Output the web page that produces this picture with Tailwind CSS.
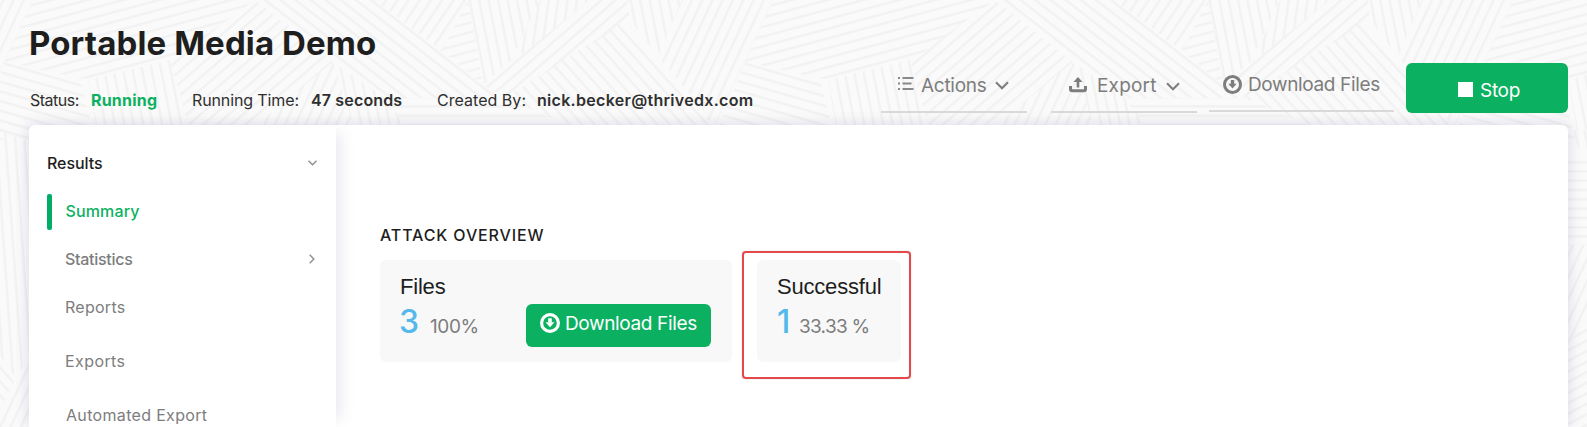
<!DOCTYPE html>
<html lang="en">
<head>
<meta charset="utf-8">
<title>Portable Media Demo</title>
<script src="https://cdn.jsdelivr.net/npm/@tailwindcss/browser@4"></script>
</head>
<body class="relative h-[427px] w-[1587px] overflow-hidden bg-[#fafafa] font-['Inter',sans-serif]">
<!-- Woven line texture behind the page -->
<svg class="absolute inset-0 -z-10" width="1587" height="427" viewBox="0 0 1587 427" aria-hidden="true">
  <defs>
    <pattern id="p0" width="20" height="9.3" patternUnits="userSpaceOnUse"><path d="M0 4h20" stroke="#f2f2f2" stroke-width="2.4"/></pattern>
    <pattern id="pn15" href="#p0" patternTransform="rotate(-15)"/>
    <pattern id="p16" href="#p0" patternTransform="rotate(16)"/>
    <pattern id="pn65" href="#p0" patternTransform="rotate(-65)"/>
    <pattern id="p79" href="#p0" patternTransform="rotate(79)"/>
    <pattern id="p86" href="#p0" patternTransform="rotate(86)"/>
    <pattern id="pn42" href="#p0" patternTransform="rotate(-41)"/>
    <pattern id="p38" href="#p0" patternTransform="rotate(38)"/>
    <pattern id="pn56" href="#p0" patternTransform="rotate(-56)"/>
    <pattern id="pn82" href="#p0" patternTransform="rotate(-82)"/>
    <pattern id="p48" href="#p0" patternTransform="rotate(48)"/>
    <pattern id="pn28" href="#p0" patternTransform="rotate(-28)"/>
    <g id="tile">
      <path fill="url(#pn65)" d="M682 0H773L713 130L700 105L658 57Z"/>
      <path fill="url(#pn15)" d="M33 0H255L170 62L88 80L5 62Z"/>
      <path fill="url(#p16)" d="M5 62L80 80L95 140H-27Z"/>
      <path fill="url(#p79)" d="M88 80L170 60L190 130H97Z"/>
      <path fill="url(#pn42)" d="M255 0L333 62L250 130H190L170 60Z"/>
      <path fill="url(#p38)" d="M257 0H375L483 85L505 98H385Z"/>
      <path fill="url(#pn65)" d="M333 62L355 130H250Z"/>
      <path fill="url(#p79)" d="M333 62L385 98L410 130H355Z"/>
      <path fill="url(#p0)" d="M385 98H505L580 130H405Z"/>
      <path fill="url(#pn56)" d="M375 0H466L442 51Z"/>
      <path fill="url(#pn15)" d="M468 0L442 51L483 85Z"/>
      <path fill="url(#p79)" d="M468 0H540L510 62L483 85Z"/>
      <path fill="url(#pn82)" d="M540 0H590L512 62Z"/>
      <path fill="url(#pn42)" d="M590 0H628L630 20L505 98L483 85Z"/>
      <path fill="url(#p48)" d="M622 22L718 130H580L505 98Z"/>
      <path fill="url(#p79)" d="M628 0H682L658 57L630 20Z"/>
    </g>
  </defs>
  <use href="#tile"/><use href="#tile" x="-740"/><use href="#tile" x="740"/><use href="#tile" x="1480"/>
  <path fill="url(#p16)" d="M0 124H29V141L0 132Z"/>
  <path fill="url(#p86)" d="M0 132L29 141V355L16 378L0 355Z"/>
  <path fill="url(#p48)" d="M0 355L16 378L0 410Z"/>
  <path fill="url(#pn65)" d="M29 355V427H0V410Z"/>
  <path fill="url(#p79)" d="M1568 130H1587V160Z"/>
  <path fill="url(#p0)" d="M1568 160H1587V245H1568Z"/>
  <path fill="url(#pn65)" d="M1568 245H1587V320L1568 345Z"/>
  <path fill="url(#pn28)" d="M1568 345L1587 320V427H1568Z"/>
</svg>

<header class="flex h-[125px] justify-between pr-[19px] pl-[29px]">
  <div class="pt-[23px]">
    <h1 class="h-10 text-[33px] leading-10 font-bold tracking-[0.13px] whitespace-nowrap text-[#1e1e1e]">Portable Media Demo</h1>
    <div class="mt-[27px] ml-px flex h-5 text-base leading-5 whitespace-nowrap text-[#2f2f2f]">
      <span class="w-[61px] tracking-[-0.5px]">Status:</span>
      <span class="w-[101px] font-bold tracking-[0.2px] text-[#0bb161]">Running</span>
      <span class="w-[119px] tracking-[-0.12px]">Running Time:</span>
      <span class="w-[126px] font-semibold tracking-[0.15px]">47 seconds</span>
      <span class="w-[100px] tracking-[0.03px]">Created By:</span>
      <span class="font-semibold tracking-[0.3px]">nick.becker@thrivedx.com</span>
    </div>
  </div>
  <div class="flex items-start pt-[63px] text-[19px] leading-6 whitespace-nowrap text-[#7d7d7d]">
    <button class="flex h-[50px] w-[146px] items-center border-b-2 border-[#d9d9d9] pb-[3px] pl-[17px]">
      <svg class="mb-1 shrink-0" width="16" height="15" viewBox="0 0 16 15" stroke="#8a8a8a" stroke-width="2" fill="none"><path d="M0 2h2M0 7.500h2M0 13h2" stroke-width="1.800"/><path d="M4.500 2H15.500M4.500 7.500H13.500M4.500 13H15.500"/></svg>
      <span class="ml-[7px] w-[74px] text-left tracking-[-0.28px]">Actions</span>
      <svg class="shrink-0" width="14" height="9" viewBox="0 0 14 9" fill="none" stroke="#7d7d7d" stroke-width="2"><path d="M1 1.200L7 7.300L13 1.200"/></svg>
    </button>
    <button class="ml-6 flex h-[50px] w-[146px] items-center border-b-2 border-[#d9d9d9] pb-0.5 pl-[18px]">
      <svg class="mb-0.5 shrink-0" width="18" height="16" viewBox="0 0 18 16" fill="none" stroke="#7d7d7d"><path d="M1.500 9V12.200Q1.500 13.700 3.200 13.700H14.800Q16.500 13.700 16.500 12.200V9" stroke-width="3"/><path d="M9 10.500V3" stroke-width="2.600"/><path d="M9 0L13.500 5H4.500Z" fill="#7d7d7d" stroke="none"/></svg>
      <span class="ml-2.5 w-[69px] text-left tracking-[0.2px]">Export</span>
      <svg class="shrink-0" width="14" height="9" viewBox="0 0 14 9" fill="none" stroke="#7d7d7d" stroke-width="2"><path d="M1 1.200L7 7.300L13 1.200"/></svg>
    </button>
    <button class="ml-3 flex h-[49px] w-[185px] items-center border-b-2 border-[#d9d9d9] pb-[3px] pl-3.5">
      <svg class="mr-[6px] mb-0.5 shrink-0" width="19" height="19" viewBox="0 0 19 19" fill="none" stroke="#7d7d7d"><circle cx="9.500" cy="9.500" r="8" stroke-width="3"/><path d="M9.500 5V9" stroke-width="3.400"/><path d="M5.300 8.700H13.700L9.500 13.600Z" fill="#7d7d7d" stroke="none"/></svg>
      <span class="tracking-[-0.36px]">Download Files</span>
    </button>
    <button class="ml-3 flex h-[50px] w-[162px] items-center rounded-md bg-[#0bb161] pt-1.5 pl-[52px] text-white">
      <span class="mb-1 size-[15px] bg-white"></span>
      <span class="ml-[7px] tracking-[-0.3px]">Stop</span>
    </button>
  </div>
</header>

<main class="mr-[19px] ml-[29px] flex h-[302px] rounded-t-md bg-white shadow-[0_0_14px_rgba(70,70,150,0.19)]">
  <nav class="w-[307px] shrink-0 overflow-y-clip rounded-tl-md pt-3.5 pr-[19px] pl-[18px] text-base text-[#7d7d7d] shadow-[12px_0_14px_-8px_rgba(70,80,140,0.13)]">
    <div class="flex h-12 items-center justify-between font-medium tracking-[-0.07px] text-[#1e1e1e]">Results
      <svg width="9" height="6" viewBox="0 0 9 6" fill="none" stroke="#8a8a8a" stroke-width="1.300"><path d="M.5 .7L4.500 4.800L8.500 .7"/></svg>
    </div>
    <div class="flex h-12 items-center font-medium tracking-[0.15px] text-[#0bb161]"><span class="mt-0.5 mr-[13.500px] h-9 w-[5px] rounded-xs bg-[#00ad66]"></span>Summary</div>
    <div class="flex h-12 items-center justify-between pl-[18px] font-medium tracking-[-0.29px]">Statistics
      <svg class="mr-0.5" width="6" height="10" viewBox="0 0 6 10" fill="none" stroke="#8a8a8a" stroke-width="1.300"><path d="M.7 .8L4.900 5L.7 9.200"/></svg>
    </div>
    <div class="flex h-12 items-center pl-[18px] tracking-[0.27px]">Reports</div>
    <div class="mt-1.5 flex h-12 items-center pl-[18px] tracking-[0.42px]">Exports</div>
    <div class="mt-1.5 flex h-12 items-center pl-[19px] tracking-[0.33px]">Automated Export</div>
  </nav>
  <section class="pt-[100px] pl-11">
    <h2 class="text-base leading-5 font-medium tracking-[0.87px] text-[#1e1e1e]">ATTACK OVERVIEW</h2>
    <div class="mt-[15px] flex gap-[25px]">
      <article class="flex h-[102px] w-[352px] rounded-md bg-[#f8f8f8] pl-[19px]">
        <div class="pt-3.5">
          <h3 class="ml-px font-['Liberation_Sans',sans-serif] text-[22px] leading-[26px] tracking-[-0.2px] text-[#1e1e1e]">Files</h3>
          <div class="mt-1 flex items-baseline whitespace-nowrap text-[#7d7d7d]">
            <span class="w-[31px] text-[32px] leading-9 font-medium text-[#54b9ea]">3</span>
            <span class="text-[19px] tracking-[-0.4px]">100%</span>
          </div>
        </div>
        <button class="mt-11 mr-[21px] ml-auto flex h-[43px] w-[185px] items-center rounded-md bg-[#0bb161] pb-0.5 pl-3.5 text-[19px] whitespace-nowrap text-white">
          <svg class="mr-[5px] mb-[3px] shrink-0" width="20" height="20" viewBox="0 0 19 19" fill="none" stroke="#fff"><circle cx="9.500" cy="9.500" r="8" stroke-width="3"/><path d="M9.500 5V9" stroke-width="3.400"/><path d="M5.300 8.700H13.700L9.500 13.600Z" fill="#fff" stroke="none"/></svg>
          <span class="tracking-[-0.36px]">Download Files</span>
        </button>
      </article>
      <article class="relative h-[102px] w-36 rounded-md bg-[#f8f8f8] pt-3.5 pl-5">
        <h3 class="font-['Liberation_Sans',sans-serif] text-[22px] leading-[26px] tracking-[-0.2px] text-[#1e1e1e]">Successful</h3>
        <div class="mt-1 flex items-baseline whitespace-nowrap text-[#7d7d7d]">
          <span class="w-[22px] text-[32px] leading-9 font-medium text-[#54b9ea]">1</span>
          <span class="text-[19px] tracking-[-0.71px]">33.33 %</span>
        </div>
        <div class="absolute -top-[9px] -left-[15px] h-32 w-[169px] rounded border-[2.500px] border-[#e5484a] shadow-[0_0_1px_#0006]"></div>
      </article>
    </div>
  </section>
</main>
</body>
</html>
